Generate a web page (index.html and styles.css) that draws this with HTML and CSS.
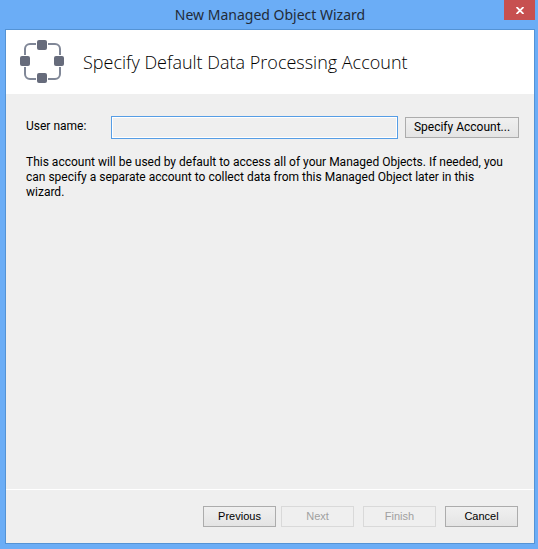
FILE: index.html
```html
<!DOCTYPE html>
<html lang="en">
<head>
<meta charset="utf-8">
<title>New Managed Object Wizard</title>
<link rel="stylesheet" href="styles.css">
</head>
<body>
<div class="window">
  <div class="titlebar">
    <h1 class="window-title">New Managed Object Wizard</h1>
    <button class="close" type="button" aria-label="Close">
      <svg width="8" height="7" viewBox="0 0 8 7" aria-hidden="true"><path d="M0.500 0 7.500 7M7.500 0 0.500 7" fill="none" stroke="#fff" stroke-width="1.800"/></svg>
    </button>
  </div>
  <form class="wizard">
    <header class="header">
      <svg class="logo" width="44" height="44" viewBox="0 0 44 44" aria-hidden="true">
        <path d="M16 4H10A5 5 0 0 0 5 9V15M28 4H35A5 5 0 0 1 40 9V15M5 27V34A5 5 0 0 0 10 39H16M40 27V34A5 5 0 0 1 35 39H28" fill="none" stroke="#808797" stroke-width="2"/>
        <g fill="#666b7b"><rect x="17" y="0" width="10" height="10" rx="2"/><rect x="0" y="16" width="10" height="10" rx="2"/><rect x="34" y="16" width="10" height="10" rx="2"/><rect x="17" y="33" width="10" height="10" rx="2"/></g>
      </svg>
      <h2 class="heading">Specify Default Data Processing Account</h2>
    </header>
    <main class="content">
      <div class="field">
        <label class="label" for="user">User name:</label>
        <input class="input" id="user" type="text" readonly>
        <button class="button button-account" type="button">Specify Account...</button>
      </div>
      <p class="note">This account will be used by default to access all of your Managed Objects. If needed, you can specify a separate account to collect data from this Managed Object later in this wizard.</p>
    </main>
    <footer class="footer">
      <div class="steps">
        <button class="button" type="button">Previous</button>
        <button class="button" type="button" disabled>Next</button>
      </div>
      <button class="button" type="button" disabled>Finish</button>
      <button class="button" type="button">Cancel</button>
    </footer>
  </form>
</div>
</body>
</html>
```
FILE: styles.css
```css
* { box-sizing: border-box; }
body {
  margin: 0;
  background: #6badf6;
  color: #000;
  font: 12px/15px Roboto, sans-serif;
}
.window {
  display: flex;
  flex-direction: column;
  min-height: 100vh;
  padding: 0 3px 5px 5px;
}
.titlebar {
  display: grid;
  grid-template-columns: 31px 1fr 31px;
  height: 29px;
}
.window-title {
  grid-column: 2;
  margin: 0;
  color: #222b38;
  font: 14px/29px "Noto Sans", sans-serif;
  text-align: center;
}
.close {
  display: flex;
  align-items: center;
  justify-content: center;
  height: 20px;
  padding: 0;
  border: 0;
  background: #c75050;
}
.wizard {
  display: flex;
  flex: 1;
  flex-direction: column;
  border: 1px solid #5493d5;
  background: #efefef;
}
.header {
  display: flex;
  align-items: center;
  gap: 19px;
  height: 64px;
  padding: 0 14px;
  background: #fff;
}
.heading {
  margin: 0;
  font: 300 18px/26px "Open Sans", sans-serif;
}
.content {
  flex: 1;
  padding: 22px 15px 22px 20px;
}
.field {
  display: flex;
  align-items: center;
  gap: 7px;
}
.label {
  width: 78px;
  padding-bottom: 2px;
}
.input {
  flex: 1;
  min-width: 0;
  height: 23px;
  border: 1px solid #569de5;
  outline: 0;
  background: #efefef;
  box-shadow: inset 0 0 0 1px #fff;
}
.note {
  max-width: 480px;
  margin: 16px 0 0;
}
.footer {
  display: flex;
  justify-content: flex-end;
  gap: 9px;
  padding: 16px 16px;
  border-top: 1px solid #fff;
}
.steps {
  display: flex;
  gap: 5px;
}
.button {
  width: 73px;
  height: 21px;
  padding: 0;
  border: 1px solid #acacac;
  background: linear-gradient(#f0f0f0, #e4e4e4);
  color: #000;
  font: 11px/19px "Liberation Sans", sans-serif;
}
.button-account {
  width: 114px;
  font: 12px/19px Roboto, sans-serif;
}
.button:disabled {
  border-color: #d9d9d9;
  background: #efefef;
  color: #a0a0a0;
}
```
